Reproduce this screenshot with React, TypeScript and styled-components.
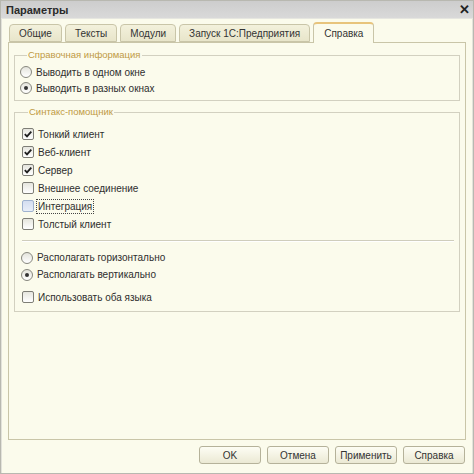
import React from 'react';
import styled, { createGlobalStyle } from 'styled-components';

const GlobalStyle = createGlobalStyle`
  html, body {
    margin: 0;
    padding: 0;
    background: #ffffff;
  }
  body {
    font-family: "Liberation Sans", Arial, sans-serif;
    font-size: 10px;
    color: #2e2e2e;
  }
  * {
    box-sizing: border-box;
  }
`;

const Window = styled.div`
  width: 474px;
  height: 474px;
  display: flex;
  flex-direction: column;
  background: #fbfbec;
  border: 1px solid #b8b8b0;
  box-shadow: inset 1px 0 0 #e2e2da, inset -1px 0 0 #e2e2da;
`;

const TitleBar = styled.div`
  height: 18px;
  flex: none;
  display: flex;
  align-items: center;
  justify-content: space-between;
  padding: 0 3px 0 5px;
  background: linear-gradient(#cdcdcd, #d9d9d9);
  border-bottom: 1px solid #e6e6e0;
  font-size: 11px;
  font-weight: 700;
  color: #2a2a2a;
`;

const Close = styled.span`
  font-size: 13px;
  font-weight: 700;
  color: #222;
  line-height: 1;
`;

const Body = styled.div`
  flex: 1;
  display: flex;
  flex-direction: column;
  padding: 3px 7px 9px 7px;
`;

const TabsRow = styled.div`
  height: 20px;
  flex: none;
  display: flex;
  align-items: flex-end;
  gap: 3px;
  padding-left: 1px;
  position: relative;
  z-index: 1;
`;

const Tab = styled.div<{ $active?: boolean }>`
  height: ${(p) => (p.$active ? '21px' : '18px')};
  margin-bottom: ${(p) => (p.$active ? '-1px' : '0')};
  padding: 0 ${(p) => (p.$active ? '10px' : '9px')};
  display: flex;
  align-items: center;
  border: 1px solid #c9c5a8;
  border-bottom: ${(p) => (p.$active ? 'none' : '1px solid #c9c5a8')};
  border-top: ${(p) => (p.$active ? '2px solid #e8c47c' : '1px solid #c9c5a8')};
  border-radius: 4px 4px 0 0;
  background: ${(p) =>
    p.$active ? '#fbfbec' : 'linear-gradient(#f3f1dc, #e8e5ca)'};
  font-size: 10px;
  color: #333;
  white-space: nowrap;
`;

const Panel = styled.div`
  flex: 1;
  border: 1px solid #c9c5a8;
  background: #fbfbec;
  padding: 6px 5px 0 5px;
  display: flex;
  flex-direction: column;
  gap: 5px;
`;

const Group = styled.fieldset<{ $pad: string }>`
  margin: 0;
  min-width: 0;
  border: 1px solid #d2d0c0;
  padding: ${(p) => p.$pad};
  display: flex;
  flex-direction: column;
`;

const Legend = styled.legend`
  padding: 0 1px;
  margin-left: 6px;
  line-height: 12px;
  font-size: 9.5px;
  color: #bf9a44;
`;

const Row = styled.label<{ $h: number; $mt?: number }>`
  height: ${(p) => p.$h}px;
  margin-top: ${(p) => p.$mt ?? 0}px;
  display: flex;
  align-items: center;
  gap: 3px;
  font-size: 10px;
  color: #2e2e2e;
`;

const Box = styled.span<{ $hover?: boolean }>`
  width: 12px;
  height: 12px;
  flex: none;
  display: flex;
  align-items: center;
  justify-content: center;
  border: 1px solid ${(p) => (p.$hover ? '#9fb2cf' : '#7e7e76')};
  border-radius: 2px;
  background: ${(p) =>
    p.$hover ? 'linear-gradient(#d4def0, #e8eef8)' : 'linear-gradient(#e6e6de, #ffffff)'};
`;

const Circle = styled.span`
  width: 12px;
  height: 12px;
  flex: none;
  display: flex;
  align-items: center;
  justify-content: center;
  border: 1px solid #87877e;
  border-radius: 50%;
  background: linear-gradient(#e4e4dc, #ffffff);
  margin-left: -1px;
`;

const Dot = styled.span`
  width: 4px;
  height: 4px;
  border-radius: 50%;
  background: #333;
`;

const Caption = styled.span<{ $focus?: boolean }>`
  padding: 0 1px;
  outline: ${(p) => (p.$focus ? '1px dotted #444' : 'none')};
  line-height: 13px;
`;

const Separator = styled.div`
  height: 2px;
  margin: 7px 0 7px 0;
  border-top: 1px solid #cfcdbc;
  border-bottom: 1px solid #ffffff;
`;

const Footer = styled.div`
  flex: none;
  display: flex;
  justify-content: flex-end;
  gap: 6px;
  padding: 6px 1px 0 0;
`;

const Button = styled.button`
  width: 62px;
  height: 18px;
  padding: 0;
  border: 1px solid #b5b29a;
  border-radius: 3px;
  background: linear-gradient(#fdfdf4, #ebe9d4);
  font-family: "Liberation Sans", Arial, sans-serif;
  font-size: 10px;
  color: #333;
`;

const Check = () => (
  <svg width="10" height="10" viewBox="0 0 10 10">
    <path d="M1.8 5.2 L4 7.4 L8.3 2.6" fill="none" stroke="#1e1e1e" strokeWidth="1.8" />
  </svg>
);

interface CheckRowProps {
  text: string;
  checked?: boolean;
  hover?: boolean;
  focus?: boolean;
  h?: number;
  mt?: number;
}

const CheckRow = ({ text, checked, hover, focus, h = 18, mt }: CheckRowProps) => (
  <Row $h={h} $mt={mt}>
    <Box $hover={hover}>{checked && <Check />}</Box>
    <Caption $focus={focus}>{text}</Caption>
  </Row>
);

const RadioRow = ({ text, checked, h = 16 }: { text: string; checked?: boolean; h?: number }) => (
  <Row $h={h}>
    <Circle>{checked && <Dot />}</Circle>
    <Caption>{text}</Caption>
  </Row>
);

const tabs = ['Общие', 'Тексты', 'Модули', 'Запуск 1С:Предприятия', 'Справка'];

export default function App() {
  return (
    <>
      <GlobalStyle />
      <Window>
        <TitleBar>
          <span>Параметры</span>
          <Close>✕</Close>
        </TitleBar>
        <Body>
          <TabsRow>
            {tabs.map((t) => (
              <Tab key={t} $active={t === 'Справка'}>
                {t}
              </Tab>
            ))}
          </TabsRow>
          <Panel>
            <Group $pad="3px 5px 4px 6px">
              <Legend>Справочная информация</Legend>
              <RadioRow text="Выводить в одном окне" />
              <RadioRow text="Выводить в разных окнах" checked />
            </Group>
            <Group $pad="7px 5px 5px 7px">
              <Legend>Синтакс-помощник</Legend>
              <CheckRow text="Тонкий клиент" checked />
              <CheckRow text="Веб-клиент" checked />
              <CheckRow text="Сервер" checked />
              <CheckRow text="Внешнее соединение" />
              <CheckRow text="Интеграция" hover focus />
              <CheckRow text="Толстый клиент" />
              <Separator />
              <RadioRow text="Располагать горизонтально" h={17} />
              <RadioRow text="Располагать вертикально" checked h={17} />
              <CheckRow text="Использовать оба языка" mt={5} />
            </Group>
          </Panel>
          <Footer>
            <Button>OK</Button>
            <Button>Отмена</Button>
            <Button>Применить</Button>
            <Button>Справка</Button>
          </Footer>
        </Body>
      </Window>
    </>
  );
}
